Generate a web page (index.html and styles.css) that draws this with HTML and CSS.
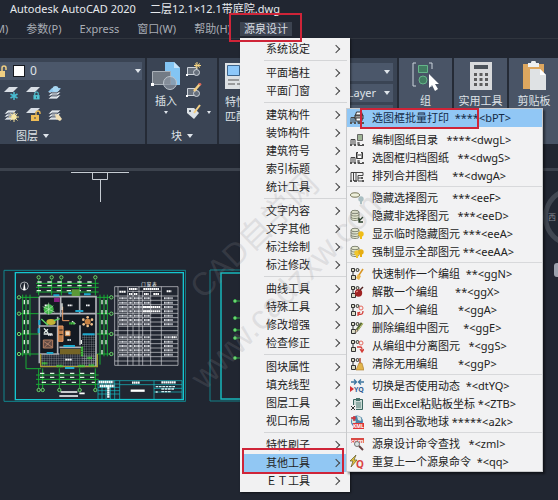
FILE: index.html
```html
<!DOCTYPE html>
<html lang="zh-CN">
<head>
<meta charset="utf-8">
<title>Autodesk AutoCAD 2020</title>
<link rel="stylesheet" href="styles.css">
</head>
<body>
<svg class="defs" width="0" height="0" aria-hidden="true">
  <defs>
    <symbol id="tree" viewBox="0 0 14 14"><path d="M1 12V6.500h4V12M3 12V6.500M8 9v3.500h4M8 10h2" fill="none" stroke="#444" stroke-width="1"/><path d="M0 11h2v2H0zM4 11h2v2H4zM8 11h2v2H8zM12 11h2v2h-2z" fill="#555"/></symbol>
    <symbol id="squares" viewBox="0 0 14 14"><g fill="#dcdcc8" stroke="#333" stroke-width="1"><path d="M1.500 1.500h3v3h-3zM1.500 8.500h4v4h-4z"/><circle cx="7.500" cy="3" r="1.500"/></g><path d="M3 5v3" stroke="#333"/></symbol>
    <symbol id="disks" viewBox="0 0 14 14"><g fill="#e4e7d0" stroke="#6b705d" stroke-width=".8"><path d="M1 3v7c0 2 8 2 8 0V3z"/><ellipse cx="5" cy="3" rx="4" ry="1.700"/><path d="M1 5.500c0 2 8 2 8 0M1 8c0 2 8 2 8 0" fill="none"/></g></symbol>
    <symbol id="bulb" viewBox="0 0 6 9"><circle cx="3" cy="3" r="2.700"/><path d="M2 5h2v3H2z"/></symbol>
    <symbol id="layers" viewBox="0 0 16 16"><path d="M5 4h9l-4 4H1zM5 7h9l-4 4H1zM5 10h9l-4 4H1z" fill="#dce2e8" stroke="#3a4454" stroke-width=".7"/></symbol>
    <symbol id="sheet" viewBox="0 0 16 16"><path d="M6 2h9l-5 5H1z" fill="#d8dee5"/></symbol>
    <symbol id="lock" viewBox="0 0 8 9"><path d="M2 4V2.500a2 2 0 0 1 4 0V4" fill="none" stroke="currentColor" stroke-width="1.300"/><path d="M.5 4h7v5h-7z" fill="currentColor"/><path d="M3.500 5.500h1v2h-1z" fill="#3a4454"/></symbol>
    <symbol id="block" viewBox="0 0 16 16"><path d="M1.500 5.500h9v7h-9z" fill="#67707c" stroke="#cdd3da"/><circle cx="10.500" cy="10.500" r="3" fill="#67707c" stroke="#cdd3da"/><path d="M0 12h2v2H0z" fill="#fff"/></symbol>
  </defs>
</svg>

<div class="app">
  <header class="titlebar"><span>Autodesk AutoCAD 2020</span><span>二层12.1×12.1带庭院.dwg</span></header>

  <nav class="menubar">
    <button class="entry cut">M)</button>
    <button class="entry">参数(P)</button>
    <button class="entry">Express</button>
    <button class="entry">窗口(W)</button>
    <button class="entry">帮助(H)</button>
    <div class="open-menu marked">
      <button class="entry active">源泉设计</button>
      <div class="menu">
        <ul>
          <li><button>系统设定</button></li>
        </ul>
        <ul>
          <li><button>平面墙柱</button></li>
          <li><button>平面门窗</button></li>
        </ul>
        <ul>
          <li><button>建筑构件</button></li>
          <li><button>装饰构件</button></li>
          <li><button>建筑符号</button></li>
          <li><button>索引标题</button></li>
          <li><button>统计工具</button></li>
        </ul>
        <ul>
          <li><button>文字内容</button></li>
          <li><button>文字其他</button></li>
          <li><button>标注绘制</button></li>
          <li><button>标注修改</button></li>
        </ul>
        <ul>
          <li><button>曲线工具</button></li>
          <li><button>特殊工具</button></li>
          <li><button>修改增强</button></li>
          <li><button>检查修正</button></li>
        </ul>
        <ul>
          <li><button>图块属性</button></li>
          <li><button>填充线型</button></li>
          <li><button>图层工具</button></li>
          <li><button>视口布局</button></li>
        </ul>
        <ul>
          <li><button>特性刷子</button></li>
          <li class="selected marked"><button>其他工具</button>
            <div class="submenu">
              <div class="group">
                <button class="current marked"><svg viewBox="0 0 14 14"><use href="#tree"/><path d="M5 4h8v4H5z" fill="#999" stroke="#333"/><path d="M6.500 1h5l1 3h-7z" fill="#fff" stroke="#333"/><path d="M6 7h6v3H6z" fill="#fff" stroke="#444"/></svg>选图框批量打印  ****&lt;bPT&gt;</button>
              </div>
              <div class="group plain">
                <button><svg viewBox="0 0 14 14"><use href="#tree"/><path d="M7.500 1.500h5v6h-5z" fill="#9fb597" stroke="#666"/></svg>编制图纸目录   ****&lt;dwgL&gt;</button>
                <button><svg viewBox="0 0 14 14"><use href="#tree"/><path d="M6.500 1.500h6v6h-6z" fill="#999" stroke="#333"/><path d="M8 1h3v2H8zM8 5h3v2H8z" fill="#fff"/></svg>选图框归档图纸   **&lt;dwgS&gt;</button>
                <button><svg viewBox="0 0 14 14"><path d="M1 12V3.500h5V12M3.500 12V4M6 3.500h7v3H8V12h5M8 9h3" fill="none" stroke="#444"/><path d="M0 11h2v2H0zM4 11h3v2H4zM11 8h2v2h-2zM12 11h2v2h-2z" fill="#555"/></svg>排列合并图档     **&lt;dwgA&gt;</button>
              </div>
              <div class="group">
                <button><svg viewBox="0 0 14 14"><ellipse cx="5" cy="4" rx="4.500" ry="2.200" fill="#eef0dc" stroke="#777758"/><use href="#bulb" x="8" y="5" width="6" height="9" fill="#a9bec2"/></svg>隐藏选择图元     ***&lt;eeF&gt;</button>
                <button><svg viewBox="0 0 14 14"><use href="#disks"/><path d="M13 8l-4 4M9 9v4h4" stroke="#263b26" fill="none" stroke-width="1.300"/></svg>隐藏非选择图元   ***&lt;eeD&gt;</button>
                <button><svg viewBox="0 0 14 14"><use href="#disks"/><use href="#bulb" x="8" y="4" width="6" height="9" fill="#efbd18"/></svg>显示临时隐藏图元 ***&lt;eeA&gt;</button>
                <button><svg viewBox="0 0 14 14"><use href="#disks"/><use href="#bulb" x="4" y="5" width="6" height="9" fill="#f1c62d"/><use href="#bulb" x="8" y="4" width="6" height="9" fill="#e6ad12"/></svg>强制显示全部图元 **&lt;eeAA&gt;</button>
              </div>
              <div class="group">
                <button><svg viewBox="0 0 14 14"><use href="#squares"/><path d="M13 2L9 8" stroke="#d99521" stroke-width="1.500"/><path d="M8 7l3 2-2 4-3-2z" fill="#e9b64c"/></svg>快速制作一个编组  **&lt;ggN&gt;</button>
                <button><svg viewBox="0 0 14 14"><use href="#squares"/><circle cx="8.500" cy="8" r="3.700" fill="#a02323"/><path d="M10 5l3-3" stroke="#502020" stroke-width="1.500"/><path d="M6 7l2-1" stroke="#ef9a90"/></svg>解散一个编组      **&lt;ggX&gt;</button>
                <button><svg viewBox="0 0 14 14"><use href="#squares"/><circle cx="11" cy="5" r="2" fill="none" stroke="#e6685d"/><path d="M13 8c0 3-1 4-5 3M8 9v4M8 11l2-2" fill="none" stroke="#d33e38" stroke-width="1.300"/></svg>加入一个编组       *&lt;ggA&gt;</button>
                <button><svg viewBox="0 0 14 14"><use href="#squares"/><path d="M12 2L7 9" stroke="#596938" stroke-width="3"/><path d="M13 2L8 9" stroke="#c8cf78"/><path d="M6 8l2 2-3 2z" fill="#eed1a4" stroke="#444" stroke-width=".5"/></svg>删除编组中图元     *&lt;ggE&gt;</button>
                <button><svg viewBox="0 0 14 14"><use href="#squares"/><circle cx="11" cy="4" r="2" fill="none" stroke="#e6685d"/><path d="M7 8h3c2 0 2 1 2 4M10 10l2 3 2-3" fill="none" stroke="#d33e38" stroke-width="1.300"/></svg>从编组中分离图元   *&lt;ggS&gt;</button>
                <button><svg viewBox="0 0 14 14"><use href="#squares"/><path d="M10 1v6" stroke="#b64b35" stroke-width="1.500"/><path d="M9 6h3l2 7H6z" fill="#e2b44c" stroke="#a77928" stroke-width=".6"/></svg>清除无用编组       *&lt;ggP&gt;</button>
              </div>
              <div class="group">
                <button><svg viewBox="0 0 14 14"><path d="M1 3h5M4 .5L6.500 3 4 5.500M8 3h6M11 .5L8.500 3 11 5.500" stroke="#3c76a0" fill="none" stroke-width="1.300"/><path d="M0 7l4 3-4 3z" fill="#d92f32"/><text x="4" y="13" font-size="7" font-weight="700" fill="#335d94">YQ</text></svg>切换是否使用动态  *&lt;dtYQ&gt;</button>
                <button><svg viewBox="0 0 14 14"><path d="M3.500 2.500h9v10h-9z" fill="#cadad5" stroke="#3b6660"/><path d="M6 1h4v3H6z" fill="#48726b"/><path d="M6 6h5M6 8h5M6 10h5" stroke="#58817b"/><path d="M0 8h6v6H0z" fill="#eee"/><path d="M1 9l4 4M5 9l-4 4" stroke="#333"/></svg>画出Excel粘贴板坐标 *&lt;ZTB&gt;</button>
                <button><svg viewBox="0 0 14 14"><circle cx="7" cy="6.500" r="6" fill="#4a83a9"/><path d="M7 1c4 0 5 3 4 5L8 5zM2 4l4 2-1 3-3-1z" fill="#d9e5e1"/><path d="M1 3h5M4 1v5" stroke="#d63539" stroke-width="1.500"/><path d="M3 8h11v6H3z" fill="#df3639"/><text x="3" y="13" font-size="5" font-weight="700" fill="#fff">KML</text></svg>输出到谷歌地球 *****&lt;a2k&gt;</button>
              </div>
              <div class="group">
                <button><svg viewBox="0 0 14 14"><path d="M1 1h13v5H1z" fill="#d84a45"/><text x="1" y="5.500" font-size="6" font-weight="700" fill="#fff">com</text><circle cx="7" cy="7" r="2.500" fill="#dde4e3" stroke="#777"/><path d="M9 9l4 4" stroke="#664242" stroke-width="2"/></svg>源泉设计命令查找   *&lt;zml&gt;</button>
                <button><svg viewBox="0 0 14 14"><path d="M6 0L0 6h3L1 12l6-7H4z" fill="#e8c83a" stroke="#5d562b" stroke-width=".7"/><text x="6" y="13" font-size="10" font-weight="700" fill="#da423e">Q</text></svg>重复上一个源泉命令  *&lt;qq&gt;</button>
              </div>
            </div>
          </li>
          <li><button>ＥＴ工具</button></li>
        </ul>
      </div>
    </div>
  </nav>

  <section class="ribbon">
    <div class="panel layer-panel">
      <button class="combo layer-combo"><svg class="unlocked" viewBox="0 0 8 13"><path d="M2 6V3a2 2 0 0 1 4 0v2" fill="none" stroke="#f0cf83" stroke-width="1.500"/><path d="M0 6h5v6H0z" fill="#f0cf83"/></svg><i class="swatch"></i><span>0</span><i class="caret"></i></button>
      <div class="layer-tools">
        <button aria-label="冻结"><svg viewBox="0 0 16 16"><use href="#sheet"/><path d="M11 7v8M7.500 9l7 4M14.500 9l-7 4" stroke="#48bdd2" stroke-width="1.500"/></svg></button>
        <button aria-label="锁定"><svg viewBox="0 0 16 16"><use href="#sheet"/><use href="#lock" x="8" y="6" width="7" height="9" color="#4fc5d4"/></svg></button>
        <button aria-label="置为当前"><svg viewBox="0 0 16 16"><use href="#layers"/><path d="M5 3h9l-4 4H1z" fill="#8dc8ee"/><circle cx="8.500" cy="4" r="3" fill="#a9d7f2"/></svg></button>
        <button aria-label="解冻"><svg viewBox="0 0 16 16"><use href="#layers"/><path d="M11 6v10M6 11h10M7.500 7.500l7 7M14.500 7.500l-7 7" stroke="#f2dc91"/><circle cx="11" cy="11" r="2.700" fill="#f8e8a6"/></svg></button>
        <button aria-label="解锁"><svg viewBox="0 0 16 16"><use href="#sheet"/><path d="M11 9V7a2 2 0 0 1 4 0v1" fill="none" stroke="#f0bd55" stroke-width="1.300"/><path d="M6 9h8v6H6z" fill="#f0bd55"/><path d="M9.500 11h1v2h-1z" fill="#3a4454"/></svg></button>
        <button aria-label="匹配图层"><svg viewBox="0 0 16 16"><use href="#layers"/><path d="M8 8l4 1 3 4-2 2-4-2z" fill="#f1dfb5"/></svg></button>
      </div>
      <div class="panel-name">图层 <i class="caret"></i></div>
    </div>

    <div class="panel block-panel">
      <div class="block-body">
        <button class="big"><svg viewBox="0 0 30 30"><path d="M14 1h9l6 6v17H14z" fill="#83c5f3"/><path d="M23 1v6h6z" fill="#c6e4fa"/><path d="M1.500 10.500h18v13h-18z" fill="#737b85" stroke="#a9b0b8"/><circle cx="19" cy="22" r="6.500" fill="#8993a0" fill-opacity=".75" stroke="#bcc4cc"/><path d="M0 22h3v3H0z" fill="#fff"/></svg>插入<i class="caret small"></i></button>
        <div class="block-tools">
          <button aria-label="创建"><svg viewBox="0 0 16 16"><use href="#block"/><path d="M11 0v7M8 3.500h7M9 1.500l5 4M14 1.500l-5 4" stroke="#f4d380"/></svg></button>
          <button aria-label="编辑"><svg viewBox="0 0 16 16"><use href="#block"/><path d="M14 1L8 8" stroke="#f2ce83" stroke-width="2.500"/><path d="M13 0l2 2" stroke="#dc6557" stroke-width="2"/></svg></button>
          <button aria-label="属性"><svg viewBox="0 0 16 16"><path d="M1 4h7l5 5-5 6-7-6z" fill="#dce2e7"/><circle cx="4" cy="7" r="1" fill="#3a4454"/><path d="M14 1L8 9" stroke="#f2ce83" stroke-width="2"/></svg><i class="caret small"></i></button>
        </div>
      </div>
      <div class="panel-name">块 <i class="caret"></i></div>
    </div>

    <div class="panel props-panel">
      <button class="match"><svg viewBox="0 0 30 26"><path d="M0 0h30v26H0z" fill="#dde1e4"/><path d="M2.500 2.500h12v10h-12z" fill="#8dc8fa" stroke="#3d658d"/><path d="M3 17h11M3 21h7M12 21h6" stroke="#555"/></svg><span>特性</span><span>匹配</span></button>
      <div class="prop-combos">
        <button class="combo"><i class="caret"></i></button>
        <button class="combo"><span>ByLayer</span><i class="caret"></i></button>
        <button class="combo"><i class="caret"></i></button>
      </div>
    </div>

    <div class="panel tool-panel">
      <button class="big"><svg viewBox="0 0 30 30"><path d="M5 2H2v23h3M18 2h3v6M18 25h3" fill="none" stroke="#cbd3db"/><path d="M7.500 4.500h9v7h-9z" fill="#427d62" stroke="#65b589"/><circle cx="12" cy="19" r="4" fill="#427d62" stroke="#65b589"/><path d="M18 13v14l3-3 3 6 3-2-3-5h4z" fill="#fff"/></svg>组</button>
    </div>
    <div class="panel tool-panel">
      <button class="big"><svg viewBox="0 0 30 30"><path d="M4 1h22v28H4z" fill="#d8dadc"/><path d="M8 4h14v4H8z" fill="#4c535b"/><path d="M8 12h3v3H8zM13.500 12h3v3h-3zM19 12h3v3h-3zM8 17h3v3H8zM13.500 17h3v3h-3zM19 17h3v3h-3zM8 22h3v3H8zM13.500 22h3v3h-3zM19 22h3v3h-3z" fill="#5c5c5c"/></svg>实用工具</button>
    </div>
    <div class="panel tool-panel last">
      <button class="big"><svg viewBox="0 0 30 30"><path d="M4 3h21v25H4z" fill="#dda75f"/><path d="M9 2h3a2.500 2.500 0 0 1 5 0h3v4H9z" fill="#edf0f2"/><path d="M11 8h10l6 6v15H11z" fill="#dfe2e4"/><path d="M21 8v6h6z" fill="#fff"/></svg>剪贴板</button>
    </div>
  </section>

  <main class="canvas">
    <svg class="ucs" viewBox="0 0 58 32"><path d="M0 1.500h58M21.500 1.500h15v7h-15zM29.500 9v22" fill="none" stroke="#c5cbd2"/></svg>

    <svg class="drawing plan" viewBox="9 27 549 402">
      <defs>
        <pattern id="tiles" width="7" height="7" patternUnits="userSpaceOnUse"><path d="M0 0h7M0 0v7" stroke="#aeb2b8" stroke-width="1.500"/></pattern>
        <g id="table-row" stroke="#dadde2" stroke-width="2" stroke-dasharray="3 1"><path d="M358 0h22M386 0h12M402 0h24M432 0h18M492 0h26" stroke-width="6"/></g>
      </defs>
      <path d="M12 31h545v393H12z" fill="none" stroke="#12868e" stroke-width="3"/>
      <path d="M46 38h504v381H46z" fill="none" stroke="#15c6d0" stroke-width="4"/>
      <circle cx="73" cy="78" r="12" fill="none" stroke="#e6e8eb" stroke-width="2"/><path d="M73 66l4 25h-8z" fill="#fff"/>
      <g fill="none" stroke="#18ac35" stroke-width="3">
        <path d="M116 58v48M155 58v48M184 58v48M239 58v48M286 58v48M108 70h188M108 82h188M108 96h188"/>
        <path d="M58 112h60M58 161h60M58 222h60M58 282h60M68 104v185M78 104v222h45M90 104v185"/>
        <path d="M290 112h44M290 161h44M290 222h44M290 282h44M300 104v210M312 104v185M322 104v185"/>
        <path d="M116 325v60M128 325v60M178 325v60M239 325v60M286 325v60M108 345h188M108 358h188M108 373h188"/>
        <g fill="#22302c" stroke="#6bd66d" stroke-width="3"><circle cx="116" cy="52" r="5"/><circle cx="155" cy="52" r="5"/><circle cx="184" cy="52" r="5"/><circle cx="239" cy="52" r="5"/><circle cx="286" cy="52" r="5"/><circle cx="57" cy="112" r="5"/><circle cx="57" cy="161" r="5"/><circle cx="57" cy="222" r="5"/><circle cx="57" cy="282" r="5"/><circle cx="334" cy="112" r="5"/><circle cx="334" cy="161" r="5"/><circle cx="334" cy="222" r="5"/><circle cx="334" cy="282" r="5"/><circle cx="116" cy="390" r="5"/><circle cx="128" cy="390" r="5"/><circle cx="178" cy="390" r="5"/><circle cx="239" cy="390" r="5"/><circle cx="286" cy="390" r="5"/></g>
      </g>
      <path d="M112 66h176M112 77h170M110 92h176M73 120v160M84 120v160M306 120v165M318 120v150M120 340h166M120 352h166M125 367h160" stroke="#d9f3da" stroke-width="4" stroke-dasharray="13 17"/>
      <path d="M118 110h170v172h-170z" fill="#141a22"/>
      <path d="M122 282h170v38H122z" fill="url(#tiles)"/><path d="M246 222h42v96h-42z" fill="url(#tiles)"/>
      <path d="M118 110h170v210M118 110v200M118 161h64M182 110v60M239 110v50M182 161h106M120 198h50M173 170v112M118 282h60M240 196v60M178 262h66" fill="none" stroke="#aeb0b5" stroke-width="5"/>
      <path d="M122 282v38h170v-38" fill="none" stroke="#a59e32" stroke-width="4"/><path d="M180 267h62v16h-62z" fill="#756426"/>
      <path d="M160 106h18M205 100h30M252 103h20M118 180v15M116 205v14M140 279h20M190 258h35M248 223h36M226 153h24M195 324h28" stroke="#1da9ce" stroke-width="6"/>
      <path d="M215 88h24v20h-24z" fill="#5c9938"/><circle cx="146" cy="148" r="15" fill="#3fb548"/><path d="M128 140l36 16M132 159l28-22M146 128v36" stroke="#bfecbe" stroke-width="2"/>
      <ellipse cx="153" cy="186" rx="14" ry="9" fill="#c5b236"/><path d="M124 177l20 19M162 182l17-6" stroke="#5dd868" stroke-width="4"/>
      <path d="M162 114h17v12h-17z" fill="#84217e"/><path d="M188 140v42h20" fill="none" stroke="#ef9e66" stroke-width="3"/><path d="M175 198h14v46h-14z" fill="#bd7b48" stroke="#ef9e66" stroke-width="3"/>
      <path d="M178 210h10M178 224h10" stroke="#222" stroke-width="3"/><path d="M196 213h14v14h-14z" fill="#e8d9c4" stroke="#da8d50" stroke-width="3"/>
      <path d="M130 240h28v24h-28z" fill="#634b43" stroke="#b78063" stroke-width="3"/><path d="M132 245l24 16M153 242l-20 20" stroke="#d79c7b" stroke-width="2"/>
      <circle cx="263" cy="185" r="9" fill="#c68142"/><g fill="#f0c18b"><circle cx="263" cy="172" r="4"/><circle cx="263" cy="198" r="4"/><circle cx="250" cy="179" r="4"/><circle cx="276" cy="179" r="4"/><circle cx="251" cy="193" r="4"/><circle cx="275" cy="193" r="4"/></g>
      <path d="M132 205l12 14M144 208l-12 10M131 222h26M186 130v20M244 240v12M216 184l10 8" stroke="#e4ece7" stroke-width="4"/>
      <path d="M126 310h16M170 318h18M235 318h20M266 316h17M208 190h17M246 260v30M262 294h14" stroke="#42c33e" stroke-width="7" stroke-dasharray="4 1"/>
      <path d="M134 136h8M203 136h14M258 136h12M202 240h12M196 299h20M144 225h14" stroke="#f3f4f6" stroke-width="5" stroke-dasharray="5 1"/>
      <path d="M182 396h50M238 400h16M178 408h56" stroke="#fff" stroke-width="5"/>
      <text x="424" y="77" font-size="13" fill="#fff">门 窗 表</text>
      <g fill="none" stroke="#d5d7db" stroke-width="2"><path d="M344 80h190v236H344zM354 80v236M383 80v236M399 92v224M417 80v236M428 92v224M452 92v224M484 80v236M383 94h101M344 108h190M354 121h180M354 134h180M354 147h180M344 160h190M354 173h180M354 186h180M354 199h180M344 212h190M344 225h190M354 238h180M354 251h180M354 264h180M354 277h180M354 290h180M344 303h190"/></g>
      <g><use href="#table-row" y="115"/><use href="#table-row" y="128"/><use href="#table-row" y="141"/><use href="#table-row" y="154"/><use href="#table-row" y="167"/><use href="#table-row" y="180"/><use href="#table-row" y="193"/><use href="#table-row" y="232"/><use href="#table-row" y="245"/><use href="#table-row" y="258"/><use href="#table-row" y="271"/><use href="#table-row" y="284"/></g>
      <path d="M358 95h20M387 87h25M430 87h48M387 102h10M402 102h10M432 102h14M460 102h18M500 94h14M428 141h54M428 154h54M516 232h14" stroke="#fff" stroke-width="6" stroke-dasharray="5 1"/>
      <path d="M294 362h252v56H294zM359 362v56M462 362v56M359 374h187M462 385h84M462 396h84M306 362v56M318 362v56M331 362v56M344 362v56M294 372h65M294 382h65M294 392h65M294 402h65" fill="none" stroke="#16c4cc" stroke-width="2"/>
      <path d="M296 366h44M299 378h44M325 376v38M396 368h24M484 367h44" stroke="#f3ffff" stroke-width="7" stroke-dasharray="5 1"/><path d="M392 392h42" stroke="#fff" stroke-width="7"/><path d="M467 380h58M484 387h40M467 396h6M484 395h30" stroke="#d4eef1" stroke-width="4" stroke-dasharray="8 2"/>
    </svg>

    <svg class="drawing second" viewBox="0 0 183 134"><path d="M1 1h181v131H1z" fill="none" stroke="#158088"/><path d="M12 4h168v126H12z" fill="none" stroke="#17b8bc" stroke-width="1.500"/><g stroke="#36ad49"><path d="M26 32h20M26 49h20M26 69h20M26 89h20M26 61h20"/><g fill="#8ce088"><circle cx="26" cy="32" r="1.500"/><circle cx="26" cy="49" r="1.500"/><circle cx="26" cy="61" r="1.500"/><circle cx="26" cy="69" r="1.500"/><circle cx="26" cy="89" r="1.500"/></g></g></svg>

    <div class="compass"><span>西</span></div>
    <div class="wcs"></div>
  </main>

  <svg class="watermark" viewBox="0 0 558 500" aria-hidden="true">
    <text x="203" y="300" font-size="32" transform="rotate(-44 203 300)">CAD自学网</text>
    <text x="205" y="391" font-size="34" transform="rotate(-46 205 391)">www.cadzxw.com</text>
  </svg>
</div>
</body>
</html>
```

FILE: styles.css
```css
* { box-sizing: border-box; }

body {
  margin: 0;
  background: #212631;
  color: #dfe3e8;
  font: 11px/18px "Noto Sans", "Noto Sans CJK SC", sans-serif;
  overflow: hidden;
}

button {
  margin: 0;
  padding: 0;
  border: 0;
  background: none;
  color: inherit;
  font: inherit;
  text-align: left;
  white-space: pre;
}

svg { display: block; flex: none; }
.defs { position: absolute; }

.app {
  position: relative;
  display: flex;
  flex-direction: column;
  min-height: 100vh;
}

.titlebar {
  display: flex;
  gap: 14px;
  height: 20px;
  padding: 0 10px;
  color: #e6e9ed;
  white-space: nowrap;
}

/* Menu bar */
.menubar {
  display: flex;
  height: 19px;
  align-items: center;
  border-bottom: 1px solid #30353e;
  color: #a9adb5;
}
.entry { padding: 0 9px; line-height: 14px; }
.entry.cut { padding-left: 0; margin-left: -5px; }
.entry.active { padding: 0 4px; background: #3c4350; color: #d9dde3; }
.open-menu { position: relative; z-index: 10; display: flex; }

.marked::after {
  content: "";
  position: absolute;
  border: 2px solid #cf2438;
  pointer-events: none;
}
.open-menu.marked::after { inset: -9px -10px -6px -11px; }

.menu {
  position: absolute;
  top: 16px;
  left: 0;
  width: 110px;
  padding: 2px 3px;
  background: #f1f1f2;
  color: #222;
  box-shadow: 1px 1px 2px #0008;
}
.menu ul { margin: 0; padding: 0; list-style: none; }
.menu ul + ul { padding-top: 6px; background: linear-gradient(#d4d5d7, #d4d5d7) 21px 2px / 100% 1px no-repeat; }
.menu li { position: relative; padding-right: 5px; }
.menu li > button {
  display: flex;
  justify-content: space-between;
  align-items: center;
  width: 100%;
  height: 18px;
  padding-left: 23px;
}
.menu li > button::after {
  content: "";
  width: 5px;
  height: 5px;
  margin-right: 3px;
  border: solid #444;
  border-width: 1px 1px 0 0;
  transform: rotate(45deg);
}
.menu li.selected { background: #91c7f3; }
.menu li.selected.marked::after { inset: -6px 3px -2px -1px; }

.submenu {
  position: absolute;
  z-index: 2;
  bottom: 0;
  left: 103px;
  width: 197px;
  border: 1px solid #c9cacc;
  background: #f2f2f3;
  box-shadow: 2px 2px 2px #0007;
}
.group + .group { padding-top: 4px; background: linear-gradient(#d8d9db, #d8d9db) 0 1px / 100% 1px no-repeat; }
.group + .group.plain { background: none; }
.submenu .group > button {
  position: relative;
  display: flex;
  align-items: center;
  gap: 8px;
  width: 100%;
  height: 18px;
  padding-left: 3px;
}
.submenu svg { width: 14px; height: 14px; }
.submenu .current { background: #91c7f5; color: #142b48; }
.submenu .current.marked::after { inset: -1px 63px -2px 13px; }

/* Ribbon */
.ribbon {
  display: flex;
  gap: 2px;
  height: 86px;
  margin-top: 19px;
  background: #252b36;
}
.panel { flex: none; background: #3a4454; overflow: hidden; }
.layer-panel { width: 145px; }
.block-panel { width: 70px; }
.props-panel { display: flex; justify-content: space-between; width: 178px; padding: 5px 4px 0 6px; }
.tool-panel { width: 53px; background: #495466; }
.tool-panel.last { flex: 1; min-width: 50px; }

.caret {
  display: inline-block;
  flex: none;
  border: solid transparent;
  border-width: 4px 3px 0;
  border-top-color: #dfe5eb;
}
.caret.small { border-width: 3px 2px 0; border-top-color: #dfe5eb; }

.combo {
  display: flex;
  align-items: center;
  height: 18px;
  background: #4b576a;
}
.combo .caret { margin-left: auto; }
.layer-combo { width: 142px; margin-top: 4px; padding-right: 1px; gap: 5px; font-size: 12px; }
.unlocked { width: 8px; height: 13px; }
.swatch { width: 12px; height: 12px; border: 1px solid #16191f; background: #fff; }

.layer-tools {
  display: grid;
  grid-template-columns: repeat(3, 16px);
  grid-auto-rows: 16px;
  gap: 5px 6px;
  height: 47px;
  padding: 5px 3px 0;
}
.layer-tools svg, .block-tools svg { width: 16px; height: 16px; }
.panel-name { display: flex; align-items: center; justify-content: center; gap: 5px; }
.layer-panel .panel-name { justify-content: flex-start; padding: 0 16px; }

.block-body { display: flex; gap: 5px; height: 69px; padding: 3px 4px 0; }
.big { display: flex; flex-direction: column; align-items: center; line-height: 20px; }
.big svg { width: 30px; height: 30px; }
.block-tools { display: flex; flex-direction: column; gap: 5px; padding-top: 1px; }
.block-tools button { display: flex; align-items: center; gap: 5px; }

.match { display: flex; flex-direction: column; line-height: 15px; }
.match svg { width: 30px; height: 26px; margin-bottom: 5px; }
.prop-combos { display: flex; flex-direction: column; gap: 3px; width: 110px; }
.prop-combos .combo { padding: 0 3px 0 52px; }

.tool-panel .big { width: 100%; padding-top: 3px; line-height: 14px; }
.tool-panel .big svg { margin-bottom: 3px; }

/* Model space */
.canvas {
  position: relative;
  flex: 1;
  margin-top: 24px;
  border-top: 3px solid #3c424d;
  overflow: hidden;
}
.ucs { position: absolute; top: 0; left: 71px; width: 58px; height: 32px; }
.drawing { position: absolute; width: 183px; height: 134px; }
.plan { top: 98px; left: 3px; }
.second { top: 98px; left: 209px; }
.compass {
  position: absolute;
  top: 16px;
  left: 543px;
  display: flex;
  align-items: center;
  width: 60px;
  height: 60px;
  border: 5px solid #414751;
  border-radius: 50%;
  color: #858b94;
  font-size: 8px;
}
.wcs { position: absolute; top: 92px; left: 554px; width: 20px; height: 14px; border-radius: 3px; background: #9ca2ad; }

.watermark {
  position: absolute;
  z-index: 20;
  top: 0;
  left: 0;
  width: 558px;
  height: 500px;
  fill: #8d8d92;
  fill-opacity: .2;
  font-family: "Liberation Sans", "Noto Sans CJK SC", sans-serif;
  pointer-events: none;
}
```
